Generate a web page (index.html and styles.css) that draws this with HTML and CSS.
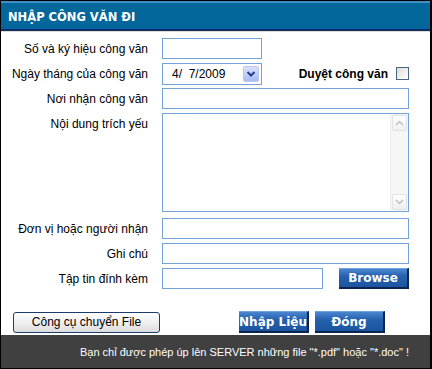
FILE: index.html
```html
<!DOCTYPE html>
<html lang="vi">
<head>
    <meta charset="UTF-8">
    <title>Nhập công văn đi</title>
    <link rel="stylesheet" href="styles.css">
</head>
<body>
    <div class="dialog">
        <div class="title">NHẬP CÔNG VĂN ĐI</div>

        <form class="form">
            <div class="row">
                <label class="label">Số và ký hiệu công văn</label>
                <input class="field field-short" type="text">
            </div>

            <div class="row">
                <label class="label">Ngày tháng của công văn</label>
                <div class="date-box">
                    <span class="date-value">4/  7/2009</span>
                    <span class="drop-btn">
                        <svg width="12" height="12" viewBox="0 0 12 12"><polyline points="2.5,4 6,7.5 9.5,4" fill="none" stroke="#1f3f8f" stroke-width="2"/></svg>
                    </span>
                </div>
                <span class="approve">Duyệt công văn</span>
                <input class="check" type="checkbox">
            </div>

            <div class="row">
                <label class="label">Nơi nhận công văn</label>
                <input class="field" type="text">
            </div>

            <div class="row row-top">
                <label class="label label-top">Nội dung trích yếu</label>
                <div class="memo">
                    <textarea class="memo-text"></textarea>
                    <div class="scroll">
                        <span class="scroll-btn">
                            <svg width="9" height="6" viewBox="0 0 9 6"><polyline points="1,5 4.5,1.5 8,5" fill="none" stroke="#b9bcc2" stroke-width="1.4"/></svg>
                        </span>
                        <span class="scroll-track"></span>
                        <span class="scroll-btn">
                            <svg width="9" height="6" viewBox="0 0 9 6"><polyline points="1,1 4.5,4.5 8,1" fill="none" stroke="#b9bcc2" stroke-width="1.4"/></svg>
                        </span>
                    </div>
                </div>
            </div>

            <div class="row row-after-memo">
                <label class="label">Đơn vị hoặc người nhận</label>
                <input class="field" type="text">
            </div>

            <div class="row">
                <label class="label">Ghi chú</label>
                <input class="field" type="text">
            </div>

            <div class="row">
                <label class="label">Tập tin đính kèm</label>
                <input class="field field-file" type="text">
                <button class="blue-btn browse-btn" type="button">Browse</button>
            </div>

            <div class="actions">
                <button class="tool-btn" type="button">Công cụ chuyển File</button>
                <button class="blue-btn save-btn" type="button">Nhập Liệu</button>
                <button class="blue-btn close-btn" type="button">Đóng</button>
            </div>
        </form>

        <div class="footer">Bạn chỉ được phép úp lên SERVER những file "*.pdf" hoặc "*.doc" !</div>
    </div>
</body>
</html>
```

FILE: styles.css
```css
body {
    margin: 0;
    padding: 0;
    background-color: #ffffff;
    font-family: "Liberation Sans", Arial, sans-serif;
    font-size: 12px;
    color: #000000;
}

.dialog {
    width: 432px;
    height: 369px;
    box-sizing: border-box;
    border: 1px solid #000000;
    border-right-width: 2px;
    display: flex;
    flex-direction: column;
    background-color: #ffffff;
}

/* Title bar */
.title {
    height: 30px;
    box-sizing: border-box;
    background-color: #03679b;
    border-top: 2px solid #3d8fc8;
    border-bottom: 2px solid #0b2f6c;
    box-shadow: 0 1px 0 #e4dccb;
    padding: 7px 0 0 7px;
    color: #ffffff;
    font-family: "DejaVu Sans", Verdana, sans-serif;
    font-weight: bold;
    font-size: 11.5px;
    line-height: 14px;
}

.form {
    display: flex;
    flex-direction: column;
    gap: 4px;
    padding: 7px 21px 0 0;
    margin: 0;
}

.row {
    display: flex;
    align-items: center;
    height: 21px;
}

.row-top {
    align-items: flex-start;
    height: 99px;
}

.row-after-memo {
    margin-top: 2px;
}

.label {
    width: 147px;
    flex: none;
    margin-right: 14px;
    text-align: right;
    white-space: nowrap;
}

.label-top {
    padding-top: 4px;
}

.field {
    flex: 1;
    height: 21px;
    box-sizing: border-box;
    margin: 0;
    border: 1px solid #73a2d8;
    padding: 0 3px;
    font: inherit;
    background: #ffffff;
}

.field-short {
    flex: none;
    width: 100px;
}

.field-file {
    flex: none;
    width: 161px;
}

/* Date picker */
.date-box {
    width: 100px;
    height: 22px;
    box-sizing: border-box;
    border: 1px solid #73a2d8;
    display: flex;
    align-items: center;
    justify-content: space-between;
    padding: 0 2px 0 9px;
}

.date-value {
    white-space: pre;
}

.drop-btn {
    width: 16px;
    height: 16px;
    box-sizing: border-box;
    border: 1px solid #b7c6f4;
    border-radius: 2px;
    background: linear-gradient(#d9e2fd, #a9bbf2);
    display: flex;
    align-items: center;
    justify-content: center;
}

.approve {
    margin-left: 37px;
    font-weight: bold;
    white-space: nowrap;
}

.check {
    appearance: none;
    width: 13px;
    height: 13px;
    margin: 0 0 0 8px;
    box-sizing: border-box;
    border: 1px solid #4a6482;
    background: linear-gradient(135deg, #dcdcd5, #ffffff);
}

/* Memo box */
.memo {
    flex: 1;
    height: 99px;
    box-sizing: border-box;
    border: 1px solid #73a2d8;
    display: flex;
}

.memo-text {
    flex: 1;
    border: none;
    margin: 0;
    resize: none;
    outline: none;
}

.scroll {
    width: 17px;
    display: flex;
    flex-direction: column;
    background-color: #f6f6f4;
    border-left: 1px solid #eeeeec;
}

.scroll-btn {
    height: 16px;
    box-sizing: border-box;
    margin: 1px;
    border: 1px solid #e0e2e6;
    border-radius: 2px;
    background: linear-gradient(#ffffff, #eeeff2);
    display: flex;
    align-items: center;
    justify-content: center;
}

.scroll-track {
    flex: 1;
}

/* Buttons */
.blue-btn {
    height: 21px;
    box-sizing: border-box;
    padding: 0;
    border: none;
    border-top: 1px solid #6ea3e0;
    border-right: 2px solid #0a2650;
    border-bottom: 2px solid #0a2650;
    background: linear-gradient(#4a86d0, #2561ad 40%, #1c54a0);
    color: #ffffff;
    font-family: "DejaVu Sans", Verdana, sans-serif;
    font-weight: bold;
    font-size: 12px;
}

.browse-btn {
    width: 70px;
    margin-left: auto;
}

.actions {
    display: flex;
    align-items: center;
    margin-top: 18px;
    padding-left: 12px;
}

.tool-btn {
    width: 147px;
    height: 21px;
    box-sizing: border-box;
    padding: 0;
    border: 1px solid #1d3b6c;
    border-radius: 3px;
    background: linear-gradient(#ffffff, #ececec 60%, #dcdcdc);
    font-family: "Liberation Sans", Arial, sans-serif;
    font-size: 12px;
    color: #000000;
}

.save-btn {
    width: 70px;
    margin-left: 79px;
    height: 22px;
}

.close-btn {
    width: 70px;
    margin-left: 6px;
    height: 22px;
}

.footer {
    margin-top: auto;
    height: 33px;
    box-sizing: border-box;
    background-color: #404040;
    color: #ffffff;
    font-size: 11px;
    text-align: right;
    padding: 11px 21px 0 0;
}
```
